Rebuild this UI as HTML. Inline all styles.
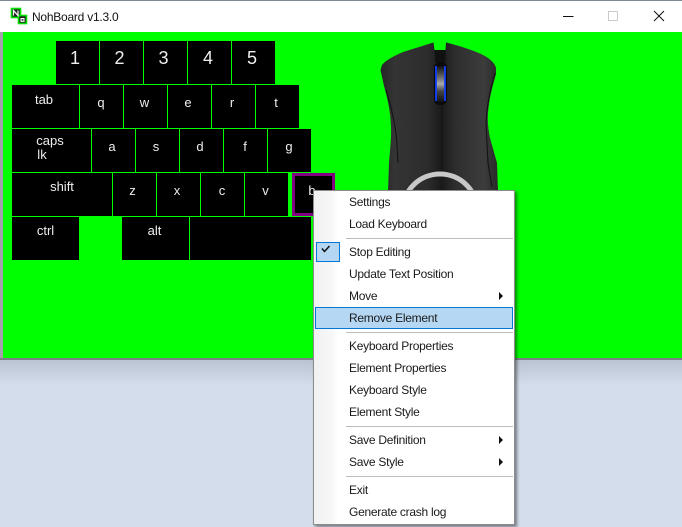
<!DOCTYPE html>
<html><head><meta charset="utf-8"><style>
html,body{margin:0;padding:0}
body{width:682px;height:527px;position:relative;overflow:hidden;background:#d3ddeb;font-family:"Liberation Sans",sans-serif}
#shadow{position:absolute;left:0;top:360px;width:682px;height:26px;background:linear-gradient(#b9c3d2,#d3ddeb)}
#win{position:absolute;left:0;top:0;width:682px;height:360px;background:#fff}
#tl{position:absolute;left:0;top:0;width:682px;height:1px;background:#7d8796}
#ll{position:absolute;left:0;top:32px;width:3px;height:328px;background:#a2a2aa}
#bl{position:absolute;left:0;top:358px;width:682px;height:2px;background:#7d7d88}
#green{position:absolute;left:3px;top:32px;width:679px;height:326px;background:#00ff00}
#title{position:absolute;left:32px;top:10px;font-size:12px;letter-spacing:-.24px;line-height:15px;color:#111;white-space:nowrap}
.k{position:absolute;background:#000}
.t{position:absolute;color:#eee;font-family:"Liberation Sans",sans-serif;transform:translateX(-50%);white-space:nowrap;line-height:1}
.d{font-size:18px}.l{font-size:13px}
.m{position:absolute;left:349px;font-size:12px;letter-spacing:-.27px;line-height:16px;color:#1a1a1a;white-space:nowrap}
.s{position:absolute;left:346px;width:167px;height:1px;background:#bdbdbd}
.a{position:absolute;left:499px;width:0;height:0;border-left:4px solid #111;border-top:4px solid transparent;border-bottom:4px solid transparent}
#menu{position:absolute;left:313px;top:190px;width:200px;height:333px;border:1px solid #8c8c8c;background:linear-gradient(90deg,#f1f1f1 0,#f7f7f7 18px,#fff 24px);box-shadow:2px 2px 3px rgba(0,0,0,.45)}
</style></head><body>
<div id="shadow"></div>
<div id="win">
<div id="tl"></div><div id="ll"></div><div id="bl"></div>
<div id="green"></div>
<svg style="position:absolute;left:10px;top:7px" width="18" height="18" viewBox="0 0 18 18">
<rect x="1.500" y="1.500" width="9" height="9" fill="#222" stroke="#00e000" stroke-width="1.600"/>
<rect x="8.500" y="8.500" width="8" height="8" fill="#222" stroke="#00e000" stroke-width="1.600"/>
<path d="M3.500 8.500V3.500L8 8.500V3.500" fill="none" stroke="#fff" stroke-width="1.200"/>
<rect x="10.500" y="11" width="4" height="4" fill="#fff"/><rect x="11.500" y="12" width="2" height=".8" fill="#222"/><rect x="11.500" y="13.400" width="2" height=".8" fill="#222"/>
</svg>
<div id="title">NohBoard v1.3.0</div>
<svg style="position:absolute;left:560px;top:8px" width="110" height="18" viewBox="0 0 110 18">
<path d="M3 8.500H13.500" stroke="#111" stroke-width="1"/>
<rect x="48.500" y="3.500" width="9" height="9" fill="none" stroke="#ccc"/>
<path d="M94 3L104 13M104 3L94 13" stroke="#111" stroke-width="1"/>
</svg>
</div>

<!-- keys -->
<div class="k" style="left:56px;top:41px;width:43px;height:43px"></div>
<div class="k" style="left:100px;top:41px;width:43px;height:43px"></div>
<div class="k" style="left:144px;top:41px;width:43px;height:43px"></div>
<div class="k" style="left:188px;top:41px;width:43px;height:43px"></div>
<div class="k" style="left:232px;top:41px;width:43px;height:43px"></div>
<div class="k" style="left:12px;top:85px;width:67px;height:43px"></div>
<div class="k" style="left:80px;top:85px;width:43px;height:43px"></div>
<div class="k" style="left:124px;top:85px;width:43px;height:43px"></div>
<div class="k" style="left:168px;top:85px;width:43px;height:43px"></div>
<div class="k" style="left:212px;top:85px;width:43px;height:43px"></div>
<div class="k" style="left:256px;top:85px;width:43px;height:43px"></div>
<div class="k" style="left:12px;top:129px;width:79px;height:43px"></div>
<div class="k" style="left:92px;top:129px;width:43px;height:43px"></div>
<div class="k" style="left:136px;top:129px;width:43px;height:43px"></div>
<div class="k" style="left:180px;top:129px;width:43px;height:43px"></div>
<div class="k" style="left:224px;top:129px;width:43px;height:43px"></div>
<div class="k" style="left:268px;top:129px;width:43px;height:43px"></div>
<div class="k" style="left:12px;top:173px;width:100px;height:43px"></div>
<div class="k" style="left:113px;top:173px;width:43px;height:43px"></div>
<div class="k" style="left:157px;top:173px;width:43px;height:43px"></div>
<div class="k" style="left:201px;top:173px;width:43px;height:43px"></div>
<div class="k" style="left:245px;top:173px;width:43px;height:43px"></div>
<div class="k" style="left:292px;top:173px;width:43px;height:43px;box-sizing:border-box;border:3px solid #800080"></div>
<div class="k" style="left:12px;top:217px;width:67px;height:43px"></div>
<div class="k" style="left:122px;top:217px;width:67px;height:43px"></div>
<div class="k" style="left:190px;top:217px;width:121px;height:43px"></div>

<div class="t d" style="left:75px;top:49px">1</div>
<div class="t d" style="left:119.500px;top:49px">2</div>
<div class="t d" style="left:163.500px;top:49px">3</div>
<div class="t d" style="left:208px;top:49px">4</div>
<div class="t d" style="left:252px;top:49px">5</div>
<div class="t l" style="left:44px;top:93px">tab</div>
<div class="t l" style="left:101px;top:96px">q</div>
<div class="t l" style="left:144.500px;top:96px">w</div>
<div class="t l" style="left:188px;top:96px">e</div>
<div class="t l" style="left:232px;top:96px">r</div>
<div class="t l" style="left:276px;top:96px">t</div>
<div class="t l" style="left:50px;top:134px">caps</div>
<div class="t l" style="left:42px;top:148px">lk</div>
<div class="t l" style="left:112px;top:140px">a</div>
<div class="t l" style="left:156px;top:140px">s</div>
<div class="t l" style="left:200px;top:140px">d</div>
<div class="t l" style="left:245px;top:140px">f</div>
<div class="t l" style="left:289px;top:140px">g</div>
<div class="t l" style="left:62px;top:180px">shift</div>
<div class="t l" style="left:132.500px;top:184px">z</div>
<div class="t l" style="left:177px;top:184px">x</div>
<div class="t l" style="left:222px;top:184px">c</div>
<div class="t l" style="left:265.500px;top:184px">v</div>
<div class="t l" style="left:312px;top:184px">b</div>
<div class="t l" style="left:45.500px;top:224px">ctrl</div>
<div class="t l" style="left:154.500px;top:224px">alt</div>

<!-- mouse -->
<svg style="position:absolute;left:0;top:0" width="682" height="360" viewBox="0 0 682 360">
<defs>
<linearGradient id="mb" x1="0" x2="1" y1="0" y2="0">
<stop offset="0" stop-color="#252525"/><stop offset=".12" stop-color="#343434"/><stop offset=".4" stop-color="#2c2c2c"/><stop offset=".52" stop-color="#1a1a1a"/><stop offset=".64" stop-color="#2e2e2e"/><stop offset=".88" stop-color="#3c3c3c"/><stop offset="1" stop-color="#282828"/>
</linearGradient>
<linearGradient id="wh" x1="0" x2="0" y1="0" y2="1">
<stop offset="0" stop-color="#111"/><stop offset=".3" stop-color="#666"/><stop offset=".5" stop-color="#aaa"/><stop offset=".7" stop-color="#444"/><stop offset="1" stop-color="#111"/>
</linearGradient>
</defs>
<path d="M433.500 42.500L434.500 50H445.500L446 42.500C460 46 480 52 488 58C492 61 495 64 496 68L496 74C493 85 490 95 488.500 108C487 118 488 128 490 138L497 163L498 192H388L389 163C390 150 391.500 138 391 127C390.500 110 387 97 384 86L380.500 70L382 65C386 60 394 56 403 52Z" fill="url(#mb)"/>
<path d="M434.500 50H445.500L445.500 62H435Z" fill="#111"/>
<path d="M386 90Q394 115 396.700 140L398 163" fill="none" stroke="#111" stroke-width="1"/>
<path d="M495 73Q487 100 486 123L488 163L492 187" fill="none" stroke="#111" stroke-width="1"/>
<path d="M442 100V170" stroke="#111" stroke-width="1"/>
<rect x="434" y="62" width="13" height="43" rx="5" fill="#0b0b0b"/>
<rect x="436" y="66" width="9" height="36" rx="3" fill="url(#wh)"/>
<path d="M436 66V101" stroke="#1040ff" stroke-width="1.800"/>
<path d="M445 66V101" stroke="#1040ff" stroke-width="1.800"/>
<circle cx="440" cy="211.500" r="37.500" fill="none" stroke="#c9c9c9" stroke-width="5"/>
</svg>

<!-- menu -->
<div id="menu"></div>
<div style="position:absolute;left:316px;top:242px;width:22px;height:18px;background:#b5d7f3;border:1px solid #0078d7"></div>
<svg style="position:absolute;left:320px;top:245px" width="12" height="10" viewBox="0 0 12 10"><path d="M2 3.500L4.500 6.500L9.500 1" fill="none" stroke="#111" stroke-width="1.500"/></svg>
<div style="position:absolute;left:315px;top:307px;width:196px;height:20px;background:#b5d7f3;border:1px solid #0078d7"></div>
<div class="m" style="top:194px">Settings</div>
<div class="m" style="top:216px">Load Keyboard</div>
<div class="s" style="top:238px"></div>
<div class="m" style="top:244px">Stop Editing</div>
<div class="m" style="top:266px">Update Text Position</div>
<div class="m" style="top:288px">Move</div>
<div class="m" style="top:310px">Remove Element</div>
<div class="s" style="top:332px"></div>
<div class="m" style="top:338px">Keyboard Properties</div>
<div class="m" style="top:360px">Element Properties</div>
<div class="m" style="top:382px">Keyboard Style</div>
<div class="m" style="top:404px">Element Style</div>
<div class="s" style="top:426px"></div>
<div class="m" style="top:432px">Save Definition</div>
<div class="m" style="top:454px">Save Style</div>
<div class="s" style="top:476px"></div>
<div class="m" style="top:482px">Exit</div>
<div class="m" style="top:504px">Generate crash log</div>
<div class="a" style="top:292px"></div>
<div class="a" style="top:436px"></div>
<div class="a" style="top:458px"></div>
</body></html>
